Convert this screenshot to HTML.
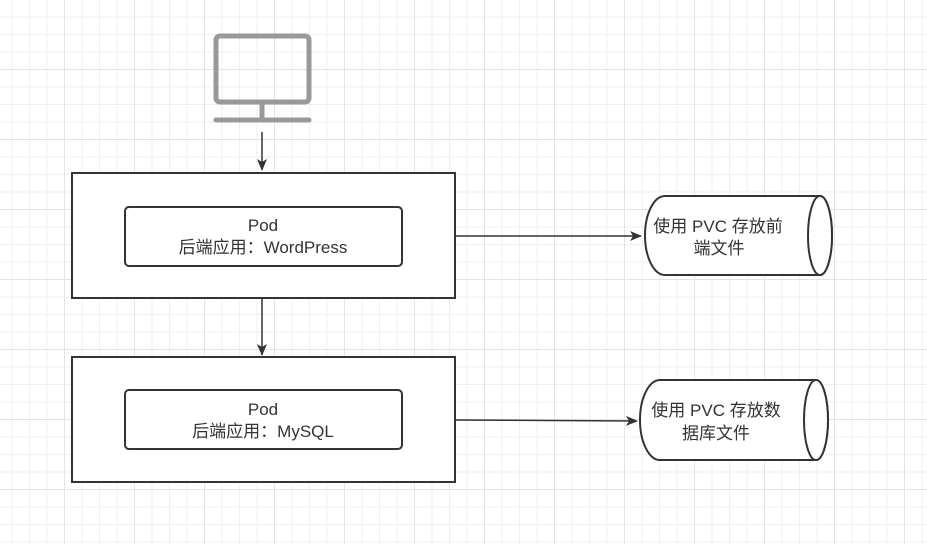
<!DOCTYPE html><html><head><style>
body{margin:0;width:927px;height:544px;overflow:hidden;background-color:#fff;
background-image:linear-gradient(#e4e4e4 1px,transparent 1px),linear-gradient(90deg,#e4e4e4 1px,transparent 1px),linear-gradient(#efefef 1px,transparent 1px),linear-gradient(90deg,#efefef 1px,transparent 1px);
background-size:70px 70px,70px 70px,17.5px 17.5px,17.5px 17.5px;background-position:64px 69px,64px 69px,11.5px 16.5px,11.5px 16.5px;font-family:"Liberation Sans","Noto Sans CJK SC",sans-serif}
svg{position:absolute;left:0;top:0}
</style></head><body>
<svg width="927" height="544" xmlns="http://www.w3.org/2000/svg">
<defs><marker id="a" markerWidth="12" markerHeight="10" refX="11" refY="5" orient="auto" markerUnits="userSpaceOnUse"><path d="M0,0L12,5L0,10l3,-5z" fill="#333"/></marker></defs>
<g fill="none" stroke="#999" stroke-width="5" stroke-linecap="round">
<rect x="216" y="36" width="93" height="66" rx="4"/>
<line x1="262" y1="103" x2="262" y2="119"/>
<line x1="216" y1="120" x2="309" y2="120"/>
</g>
<g stroke="#333" stroke-width="1.5" fill="none">
<line x1="262" y1="132" x2="262" y2="170" marker-end="url(#a)"/>
<line x1="262" y1="298" x2="262" y2="355" marker-end="url(#a)"/>
<line x1="455" y1="236" x2="641" y2="236" marker-end="url(#a)"/>
<line x1="455" y1="420" x2="637" y2="421" marker-end="url(#a)"/>
</g>
<g stroke="#333" stroke-width="2" fill="#fff">
<rect x="72" y="173" width="383" height="125"/>
<rect x="125" y="207" width="277" height="59" rx="4"/>
<rect x="72" y="357" width="383" height="125"/>
<rect x="125" y="390" width="277" height="59" rx="4"/>
<path d="M665,196 H820 A12,39.5 0 0 1 820,275 H665 A20,39.5 0 0 1 665,196z"/>
<ellipse cx="820" cy="235.5" rx="12" ry="39.5"/>
<path d="M660,380 H816 A12,40 0 0 1 816,460 H660 A20,40 0 0 1 660,380z"/>
<ellipse cx="816" cy="420" rx="12" ry="40"/>
</g>
<g fill="#333" font-size="17" text-anchor="middle" font-family="Liberation Sans,Noto Sans CJK SC,sans-serif">
<text x="263" y="231">Pod</text><text x="263" y="253">后端应用：WordPress</text>
<text x="263" y="415">Pod</text><text x="263" y="437">后端应用：MySQL</text>
<text x="718" y="232">使用 PVC 存放前</text><text x="719" y="254">端文件</text>
<text x="716" y="416">使用 PVC 存放数</text><text x="716" y="439">据库文件</text>
</g>
</svg>
</body></html>
